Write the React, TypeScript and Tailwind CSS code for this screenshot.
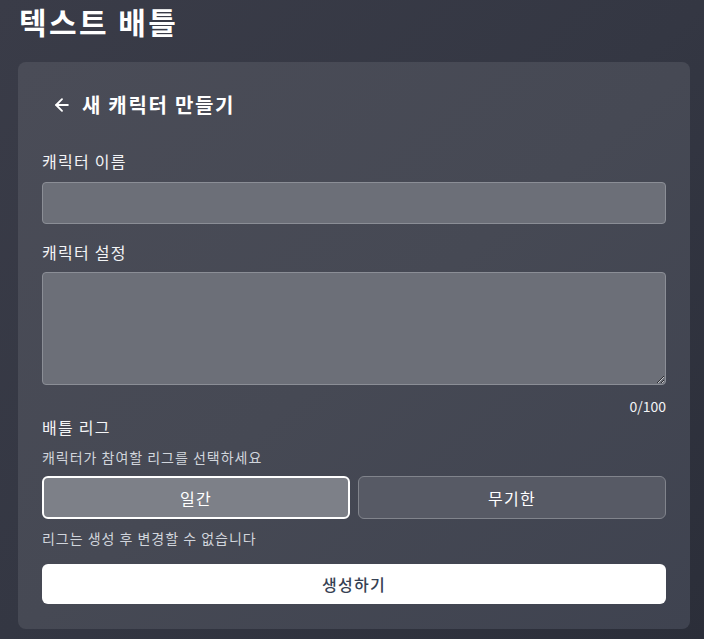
import React, { useState } from 'react';
import { ArrowLeft } from 'lucide-react';

const font = { fontFamily: '"Noto Sans CJK KR", "Noto Sans", sans-serif' };

export default function App() {
  const [name, setName] = useState('');
  const [desc, setDesc] = useState('');
  const [league, setLeague] = useState<'daily' | 'forever'>('daily');

  return (
    <div
      style={font}
      className="min-h-screen bg-gradient-to-br from-[#3a3c48] via-[#343743] to-[#2b2e39] text-white"
    >
      <h1 className="pl-[19px] pt-[3px] text-3xl font-bold leading-9 tracking-[0.08em] text-white">텍스트 배틀</h1>

      <div className="ml-[18px] mt-[23px] w-[672px] rounded-lg bg-gradient-to-br from-[#4a4c57] via-[#464954] to-[#3f4350] px-6 pt-[29px] pb-[25px]">
        <div className="flex items-center gap-[10px] pl-[10px]">
          <ArrowLeft className="h-5 w-5 text-white" strokeWidth={2.25} />
          <h2 className="text-xl font-bold leading-7 tracking-[0.085em]">새 캐릭터 만들기</h2>
        </div>

        <label className="mt-[30px] block text-base leading-6 tracking-[0.08em] text-gray-100">캐릭터 이름</label>
        <input
          value={name}
          onChange={(e) => setName(e.target.value)}
          className="mt-[9px] block h-[42px] w-full rounded border border-[#8b8e96] bg-[#6c6f78] px-3 text-white outline-none"
        />

        <label className="mt-4 block text-base leading-6 tracking-[0.08em] text-gray-100">캐릭터 설정</label>
        <textarea
          value={desc}
          maxLength={100}
          onChange={(e) => setDesc(e.target.value)}
          className="mt-2 block h-[113px] w-full rounded border border-[#8b8e96] bg-[#6c6f78] px-3 py-2 text-white outline-none"
        />
        <div className="mt-[11px] text-right text-sm leading-5 text-gray-100">{desc.length}/100</div>

        <div className="-mt-px text-base leading-6 tracking-[0.08em] text-gray-100">배틀 리그</div>
        <p className="mt-2 text-sm leading-5 tracking-[0.07em] text-gray-300">캐릭터가 참여할 리그를 선택하세요</p>

        <div className="mt-[9px] grid grid-cols-2 gap-2">
          <button
            onClick={() => setLeague('daily')}
            className={`h-[43px] rounded-md text-base tracking-[0.08em] ${
              league === 'daily'
                ? 'border-2 border-white bg-[#7d8088]'
                : 'border border-[#81848c] bg-[#575a65]'
            }`}
          >
            일간
          </button>
          <button
            onClick={() => setLeague('forever')}
            className={`h-[43px] rounded-md text-base tracking-[0.08em] ${
              league === 'forever'
                ? 'border-2 border-white bg-[#7d8088]'
                : 'border border-[#81848c] bg-[#575a65]'
            }`}
          >
            무기한
          </button>
        </div>

        <p className="mt-[9px] text-sm leading-5 tracking-[0.07em] text-gray-300">리그는 생성 후 변경할 수 없습니다</p>

        <button className="mt-4 h-10 w-full rounded-md bg-white text-base font-medium tracking-[0.08em] text-gray-700">
          생성하기
        </button>
      </div>
    </div>
  );
}
